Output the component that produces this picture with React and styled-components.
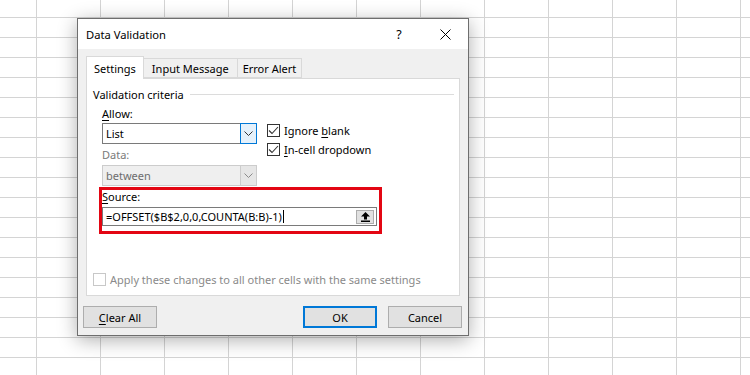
import React from "react";
import styled, { createGlobalStyle } from "styled-components";

const GlobalStyle = createGlobalStyle`
  html, body { margin: 0; padding: 0; }
  body {
    width: 750px;
    height: 375px;
    overflow: hidden;
    background-color: #ffffff;
    background-image:
      linear-gradient(to right, #d4d4d4 1px, transparent 1px),
      linear-gradient(to bottom, #d4d4d4 1px, transparent 1px);
    background-size: 64px 20px;
    background-position: 36px 17px;
    font-family: "Noto Sans", "Liberation Sans", sans-serif;
    font-size: 11px;
    color: #000;
  }
  * { box-sizing: border-box; }
`;

const Page = styled.div`
  padding: 18px 0 0 77px;
`;

const Dialog = styled.div`
  width: 392px;
  height: 318px;
  background: #f0f0f0;
  border: 1px solid #6e6e6e;
  box-shadow: 0 4px 18px rgba(0, 0, 0, 0.32);
  display: flex;
  flex-direction: column;
`;

const TitleBar = styled.div`
  height: 30px;
  background: #ffffff;
  display: flex;
  align-items: center;
  padding: 0 0 0 8px;
  font-size: 11.2px;
`;

const Title = styled.div`
  flex: 1;
`;

const TitleButton = styled.div`
  width: 46px;
  height: 30px;
  display: flex;
  align-items: center;
  justify-content: center;
  font-size: 12.5px;
`;

const Body = styled.div`
  padding: 7px 8px 0 8px;
  display: flex;
  flex-direction: column;
`;

const TabRow = styled.div`
  display: flex;
  align-items: flex-end;
  height: 22px;
  position: relative;
  z-index: 1;
`;

const Tab = styled.div`
  height: ${(p) => (p.$active ? "23px" : "20px")};
  padding: 0 ${(p) => p.$pad}px;
  margin-left: ${(p) => (p.$first ? "0" : "-1px")};
  margin-bottom: ${(p) => (p.$active ? "-1px" : "0")};
  background: ${(p) => (p.$active ? "#ffffff" : "#f0f0f0")};
  border: 1px solid #d9d9d9;
  border-bottom: ${(p) => (p.$active ? "none" : "1px solid #d9d9d9")};
  display: flex;
  align-items: center;
  position: relative;
  z-index: ${(p) => (p.$active ? 2 : 1)};
  white-space: nowrap;
`;

const Panel = styled.div`
  height: 218px;
  background: #ffffff;
  border: 1px solid #d9d9d9;
  padding: 7px 5px 6px 6px;
  display: flex;
  flex-direction: column;
`;

const GroupHeader = styled.div`
  display: flex;
  align-items: center;
  gap: 6px;
  height: 16px;
`;

const GroupLine = styled.div`
  flex: 1;
  height: 1px;
  background: #dcdcdc;
`;

const CriteriaRow = styled.div`
  display: flex;
  padding-left: 9px;
`;

const LeftCol = styled.div`
  width: 155px;
  display: flex;
  flex-direction: column;
`;

const RightCol = styled.div`
  padding: 19px 0 0 10px;
  display: flex;
  flex-direction: column;
`;

const FieldLabel = styled.div`
  height: 16px;
  line-height: 16px;
  margin-top: ${(p) => p.$mt || 0}px;
  color: ${(p) => (p.$disabled ? "#7a7a7a" : "#000")};
`;

const U = styled.span`
  text-decoration: underline;
  text-underline-offset: 2px;
`;

const Select = styled.div`
  height: 21px;
  margin-top: ${(p) => p.$mt || 0}px;
  display: flex;
  border: 1px solid ${(p) => (p.$disabled ? "#cccccc" : "#7a7a7a")};
  background: ${(p) => (p.$disabled ? "#efefef" : "#ffffff")};
  color: ${(p) => (p.$disabled ? "#6d6d6d" : "#000")};
`;

const SelectValue = styled.div`
  flex: 1;
  display: flex;
  align-items: center;
  padding-left: 3px;
`;

const SelectButton = styled.div`
  width: 17px;
  margin: -1px -1px -1px 0;
  display: flex;
  align-items: center;
  justify-content: center;
  background: ${(p) => (p.$disabled ? "#e6e6e6" : "#e5f1fb")};
  border: 1px solid ${(p) => (p.$disabled ? "#cccccc" : "#0078d7")};
`;

const CheckRow = styled.label`
  height: 19px;
  display: flex;
  align-items: center;
  gap: 4px;
  color: ${(p) => (p.$disabled ? "#8a8a8a" : "#000")};
  white-space: nowrap;
`;

const Box = styled.span`
  width: 13px;
  height: 13px;
  border: 1px solid ${(p) => (p.$disabled ? "#c8c8c8" : "#333333")};
  background: #ffffff;
  display: flex;
  align-items: center;
  justify-content: center;
  flex-shrink: 0;
`;

const Highlight = styled.div`
  width: 283px;
  margin: 1px 0 0 -3px;
  border: 3px solid #e30613;
  padding: 0 2px 5px 0;
  display: flex;
  flex-direction: column;
`;

const SourceLabel = styled.div`
  height: 14px;
  line-height: 14px;
`;

const SourceInput = styled.div`
  height: 19px;
  margin-top: 3px;
  border: 1px solid #7a7a7a;
  background: #ffffff;
  display: flex;
  align-items: center;
  padding: 0 2px 0 3px;
`;

const SourceText = styled.div`
  flex: 1;
  display: flex;
  align-items: center;
  white-space: nowrap;
`;

const Caret = styled.span`
  display: inline-block;
  width: 1px;
  height: 13px;
  background: #000;
  margin-left: 1px;
`;

const RefButton = styled.div`
  width: 18px;
  height: 14px;
  background: #e1e1e1;
  border: 1px solid #adadad;
  display: flex;
  align-items: center;
  justify-content: center;
`;

const ApplyRow = styled.div`
  margin-top: auto;
`;

const ButtonRow = styled.div`
  display: flex;
  align-items: center;
  margin: 10px -2px 0 -3px;
  gap: 11px;
`;

const Button = styled.div`
  width: 74px;
  height: 22px;
  background: #e1e1e1;
  border: ${(p) => (p.$default ? "2px solid #0078d7" : "1px solid #adadad")};
  display: flex;
  align-items: center;
  justify-content: center;
  margin-left: ${(p) => (p.$push ? "auto" : "0")};
`;

const Chevron = ({ color = "#333" }) => (
  <svg width="9" height="5" viewBox="0 0 9 5">
    <polyline points="0.5,0.5 4.5,4.5 8.5,0.5" fill="none" stroke={color} strokeWidth="1" />
  </svg>
);

const Check = () => (
  <svg width="11" height="11" viewBox="0 0 11 11">
    <polyline points="1,5.5 4,8.5 10,2" fill="none" stroke="#333" strokeWidth="1.1" />
  </svg>
);

const Checkbox = ({ checked, disabled, children }) => (
  <CheckRow $disabled={disabled}>
    <Box $disabled={disabled}>{checked && <Check />}</Box>
    <span>{children}</span>
  </CheckRow>
);

export default function App() {
  return (
    <>
      <GlobalStyle />
      <Page>
        <Dialog>
          <TitleBar>
            <Title>Data Validation</Title>
            <TitleButton>?</TitleButton>
            <TitleButton>
              <svg width="11" height="11" viewBox="0 0 11 11">
                <line x1="0.5" y1="0.5" x2="10.5" y2="10.5" stroke="#000" strokeWidth="1" />
                <line x1="10.5" y1="0.5" x2="0.5" y2="10.5" stroke="#000" strokeWidth="1" />
              </svg>
            </TitleButton>
          </TitleBar>
          <Body>
            <TabRow>
              <Tab $active $first $pad={7}>Settings</Tab>
              <Tab $pad={8}>Input Message</Tab>
              <Tab $pad={5}>Error Alert</Tab>
            </TabRow>
            <Panel>
              <GroupHeader>
                <span>Validation criteria</span>
                <GroupLine />
              </GroupHeader>
              <CriteriaRow>
                <LeftCol>
                  <FieldLabel $mt={4}>
                    <U>A</U>llow:
                  </FieldLabel>
                  <Select $mt={1}>
                    <SelectValue>List</SelectValue>
                    <SelectButton>
                      <Chevron />
                    </SelectButton>
                  </Select>
                  <FieldLabel $mt={3} $disabled>
                    Data:
                  </FieldLabel>
                  <Select $mt={2} $disabled>
                    <SelectValue>between</SelectValue>
                    <SelectButton $disabled>
                      <Chevron color="#8a8a8a" />
                    </SelectButton>
                  </Select>
                  <Highlight>
                    <SourceLabel>
                      <U>S</U>ource:
                    </SourceLabel>
                    <SourceInput>
                      <SourceText>
                        =OFFSET($B$2,0,0,COUNTA(B:B)-1)
                        <Caret />
                      </SourceText>
                      <RefButton>
                        <svg width="9" height="10" viewBox="0 0 9 10">
                          <polygon points="4.5,0 9,4.5 6,4.5 6,7.5 3,7.5 3,4.5 0,4.5" fill="#000" />
                          <rect x="0" y="8.5" width="9" height="1.5" fill="#000" />
                        </svg>
                      </RefButton>
                    </SourceInput>
                  </Highlight>
                </LeftCol>
                <RightCol>
                  <Checkbox checked>
                    Ignore <U>b</U>lank
                  </Checkbox>
                  <Checkbox checked>
                    <U>I</U>n-cell dropdown
                  </Checkbox>
                </RightCol>
              </CriteriaRow>
              <ApplyRow>
                <Checkbox disabled>Apply these changes to all other cells with the same settings</Checkbox>
              </ApplyRow>
            </Panel>
            <ButtonRow>
              <Button>
                <span>
                  <U>C</U>lear All
                </span>
              </Button>
              <Button $default $push>OK</Button>
              <Button>Cancel</Button>
            </ButtonRow>
          </Body>
        </Dialog>
      </Page>
    </>
  );
}
